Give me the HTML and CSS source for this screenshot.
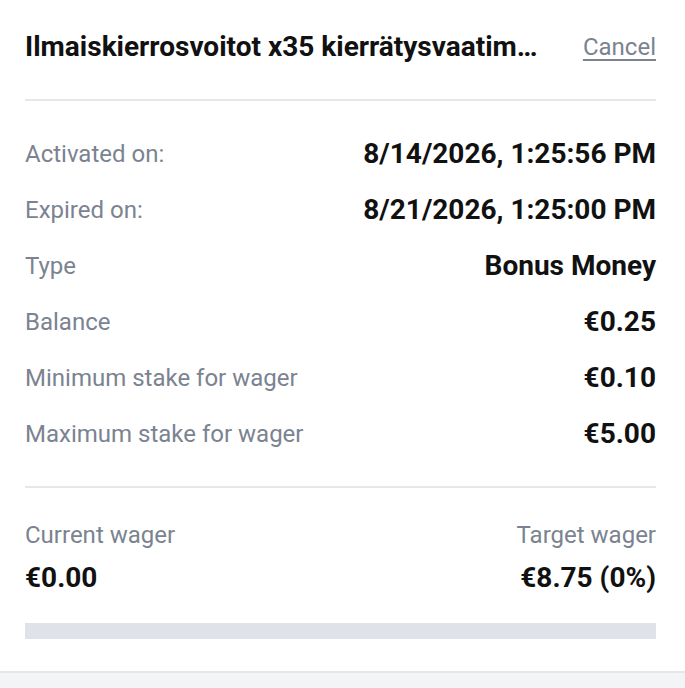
FILE: index.html
```html
<!DOCTYPE html>
<html lang="en">
<head>
    <meta charset="UTF-8">
    <meta name="viewport" content="width=device-width, initial-scale=1.0">
    <title>Bonus details</title>
    <link rel="stylesheet" href="styles.css">
</head>
<body>
    <div class="panel">
        <div class="panel-header">
            <h2 class="bonus-title">Ilmaiskierrosvoitot x35 kierrätysvaatimus</h2>
            <a href="#" class="cancel-link">Cancel</a>
        </div>
        <div class="details">
            <div class="detail-row">
                <span class="detail-label">Activated on:</span>
                <span class="detail-value">8/14/2026, 1:25:56 PM</span>
            </div>
            <div class="detail-row">
                <span class="detail-label">Expired on:</span>
                <span class="detail-value">8/21/2026, 1:25:00 PM</span>
            </div>
            <div class="detail-row">
                <span class="detail-label">Type</span>
                <span class="detail-value">Bonus Money</span>
            </div>
            <div class="detail-row">
                <span class="detail-label">Balance</span>
                <span class="detail-value">€0.25</span>
            </div>
            <div class="detail-row">
                <span class="detail-label">Minimum stake for wager</span>
                <span class="detail-value">€0.10</span>
            </div>
            <div class="detail-row">
                <span class="detail-label">Maximum stake for wager</span>
                <span class="detail-value">€5.00</span>
            </div>
        </div>
        <div class="wager">
            <div class="wager-col">
                <span class="detail-label">Current wager</span>
                <span class="wager-value">€0.00</span>
            </div>
            <div class="wager-col wager-col-right">
                <span class="detail-label">Target wager</span>
                <span class="wager-value">€8.75 (0%)</span>
            </div>
        </div>
        <div class="progress">
            <div class="progress-fill" style="width: 0%"></div>
        </div>
    </div>
    <div class="footer-strip"></div>
</body>
</html>
```

FILE: styles.css
```css
body {
    margin: 0;
    font-family: Roboto, "Liberation Sans", Arial, sans-serif;
    background-color: white;
    color: #111;
}
.panel {
    padding: 0 29px 32px 25px;
}
.panel-header {
    display: flex;
    align-items: center;
    gap: 39px;
    padding: 30px 0 35px;
    border-bottom: 2px solid #e5e7eb;
}
.bonus-title {
    flex: 1;
    min-width: 0;
    margin: 0;
    font-size: 28px;
    font-weight: 700;
    line-height: 34px;
    white-space: nowrap;
    overflow: hidden;
    text-overflow: ellipsis;
}
.cancel-link {
    font-size: 24px;
    line-height: 34px;
    color: #7b8391;
    text-decoration: underline;
    text-underline-offset: 4px;
}
.details {
    padding: 25px 0 24px;
    border-bottom: 2px solid #e5e7eb;
}
.detail-row {
    display: flex;
    justify-content: space-between;
    align-items: center;
    height: 56px;
}
.detail-label {
    font-size: 24px;
    color: #7b8391;
    line-height: 28px;
}
.detail-value {
    font-size: 28px;
    font-weight: 700;
    line-height: 28px;
}
.wager {
    display: flex;
    justify-content: space-between;
    padding-top: 33px;
}
.wager-col {
    display: flex;
    flex-direction: column;
    gap: 15px;
}
.wager-col-right {
    align-items: flex-end;
}
.wager-value {
    font-size: 28px;
    font-weight: 700;
    line-height: 28px;
}
.progress {
    margin-top: 31px;
    height: 16px;
    background-color: #dfe2e8;
}
.progress-fill {
    height: 100%;
    background-color: #22c55e;
}
.footer-strip {
    border-top: 2px solid #e5e7eb;
    background-color: #f3f4f6;
    height: 40px;
}
```
